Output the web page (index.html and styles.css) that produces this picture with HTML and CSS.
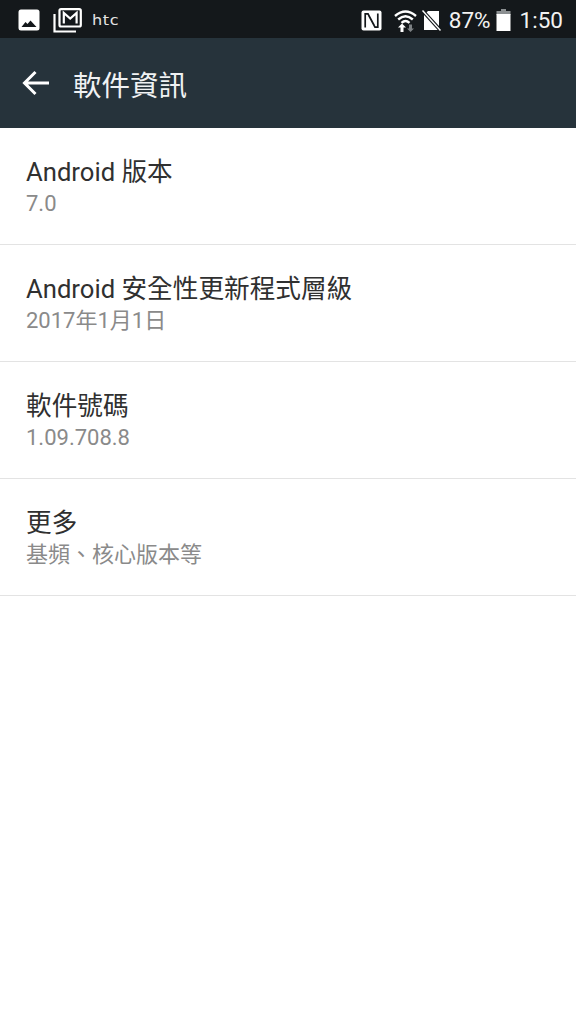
FILE: index.html
```html
<!DOCTYPE html>
<html lang="zh-TW">
<head>
    <meta charset="UTF-8">
    <meta name="viewport" content="width=device-width, initial-scale=1.0">
    <title>軟件資訊</title>
    <link rel="stylesheet" href="styles.css">
</head>
<body>
    <div class="status-bar">
        <div class="status-left">
            <svg class="icon-photo" width="22" height="22" viewBox="0 0 22 22">
                <rect x="0.5" y="0.5" width="21" height="21" rx="2.5" fill="#fff"/>
                <path d="M3.5 18 L7.5 13 L9.5 15 L12.5 11.5 L18.5 18 Z" fill="#14181b"/>
            </svg>
            <svg class="icon-mail" width="29" height="25" viewBox="0 0 29 25">
                <path d="M1.5 6 V23.5 H23" fill="none" stroke="#fff" stroke-width="2.2"/>
                <rect x="6.5" y="1.2" width="21.3" height="17.3" rx="1.5" fill="none" stroke="#fff" stroke-width="2.2"/>
                <path d="M10.8 15.5 V5 L17.2 10.5 L23.6 5 V15.5" fill="none" stroke="#fff" stroke-width="2.2"/>
            </svg>
            <span class="htc">htc</span>
        </div>
        <div class="status-right">
            <svg class="icon-nfc" width="21" height="21" viewBox="0 0 21 21">
                <rect x="0.5" y="0.5" width="20" height="20" rx="2" fill="#fff"/>
                <path d="M4.2 17.5 V3.8 H7 L13.2 15.5 M16.8 3.5 V17.2 H14 L7.8 5.5" fill="none" stroke="#14181b" stroke-width="1.7"/>
            </svg>
            <svg class="icon-wifi" width="23" height="23" viewBox="0 0 23 23">
                <path d="M1 7 Q11.5 -2 22 7 M4.2 10.5 Q11.5 4 18.8 10.5 M7.5 13.8 Q11.5 10 15.5 13.8" fill="none" stroke="#fff" stroke-width="2.4"/>
                <path d="M8 14.5 L4 18.5 H6.5 V23 H9.5 V18.5 H12 Z" fill="#fff"/>
                <path d="M15 15.5 V19.5 H13 L16.5 23 L20 19.5 H18 V15.5 Z" fill="#7c8083"/>
            </svg>
            <svg class="icon-sim" width="19" height="21" viewBox="0 0 19 21">
                <path d="M6 1 H17 V20 H2 V5 Z" fill="#fff"/>
                <path d="M0 0 L19 21" stroke="#14181b" stroke-width="3.6"/>
                <path d="M0.5 0.5 L18.5 20.5" stroke="#fff" stroke-width="1.5"/>
            </svg>
            <span class="percent">87%</span>
            <svg class="icon-battery" width="15" height="22" viewBox="0 0 15 22">
                <rect x="5" y="0" width="5" height="3" fill="#8b8f91"/>
                <rect x="0.5" y="2" width="14" height="4" fill="#8b8f91"/>
                <rect x="0.5" y="5" width="14" height="17" fill="#fff"/>
            </svg>
            <span class="clock">1:50</span>
        </div>
    </div>

    <div class="app-bar">
        <svg class="back-arrow" width="28" height="26" viewBox="0 0 28 26">
            <path d="M27 13 H3 M13.5 2 L2.5 13 L13.5 24" fill="none" stroke="#fff" stroke-width="3"/>
        </svg>
        <h1>軟件資訊</h1>
    </div>

    <ul class="info-list">
        <li class="info-item">
            <div class="item-title">Android 版本</div>
            <div class="item-sub">7.0</div>
        </li>
        <li class="info-item">
            <div class="item-title">Android 安全性更新程式層級</div>
            <div class="item-sub">2017年1月1日</div>
        </li>
        <li class="info-item">
            <div class="item-title">軟件號碼</div>
            <div class="item-sub">1.09.708.8</div>
        </li>
        <li class="info-item">
            <div class="item-title">更多</div>
            <div class="item-sub">基頻、核心版本等</div>
        </li>
    </ul>
</body>
</html>
```

FILE: styles.css
```css
* {
    margin: 0;
    padding: 0;
    box-sizing: border-box;
    font-family: 'Roboto', 'Noto Sans CJK TC', sans-serif;
}

body {
    background: #fff;
    width: 576px;
    height: 1024px;
    overflow: hidden;
}

.status-bar {
    background: #14181b;
    height: 38px;
    display: flex;
    justify-content: space-between;
    align-items: center;
    padding: 2px 13px 0 18px;
    color: #fff;
}

.status-left,
.status-right {
    display: flex;
    align-items: center;
}

.icon-mail {
    margin-left: 13px;
}

.htc {
    margin-left: 10px;
    font-family: 'DejaVu Sans', sans-serif;
    font-size: 14px;
    letter-spacing: 0.5px;
    color: #e4e4e4;
    transform: scaleX(1.15);
    transform-origin: left center;
}

.icon-wifi {
    margin-left: 12px;
}

.icon-sim {
    margin-left: 5px;
}

.percent {
    margin-left: 8px;
    font-size: 22.5px;
    color: #f2f2f2;
}

.icon-battery {
    margin-left: 5px;
}

.clock {
    margin-left: 9px;
    font-size: 22.5px;
    color: #f2f2f2;
}

.app-bar {
    background: #26333b;
    height: 90px;
    display: flex;
    align-items: center;
    padding: 0 0 0 22px;
    color: #fff;
}

.app-bar h1 {
    margin-left: 23px;
    font-size: 28.5px;
    font-weight: 400;
    color: #f0f2f3;
}

.info-list {
    list-style: none;
}

.info-item {
    height: 117px;
    padding: 27px 26px 0;
    border-bottom: 1px solid #e3e3e3;
}

.item-title {
    font-size: 25.65px;
    line-height: 34px;
    color: #303030;
}

.item-sub {
    font-size: 22px;
    line-height: 30px;
    color: #8a8a8a;
}
```
